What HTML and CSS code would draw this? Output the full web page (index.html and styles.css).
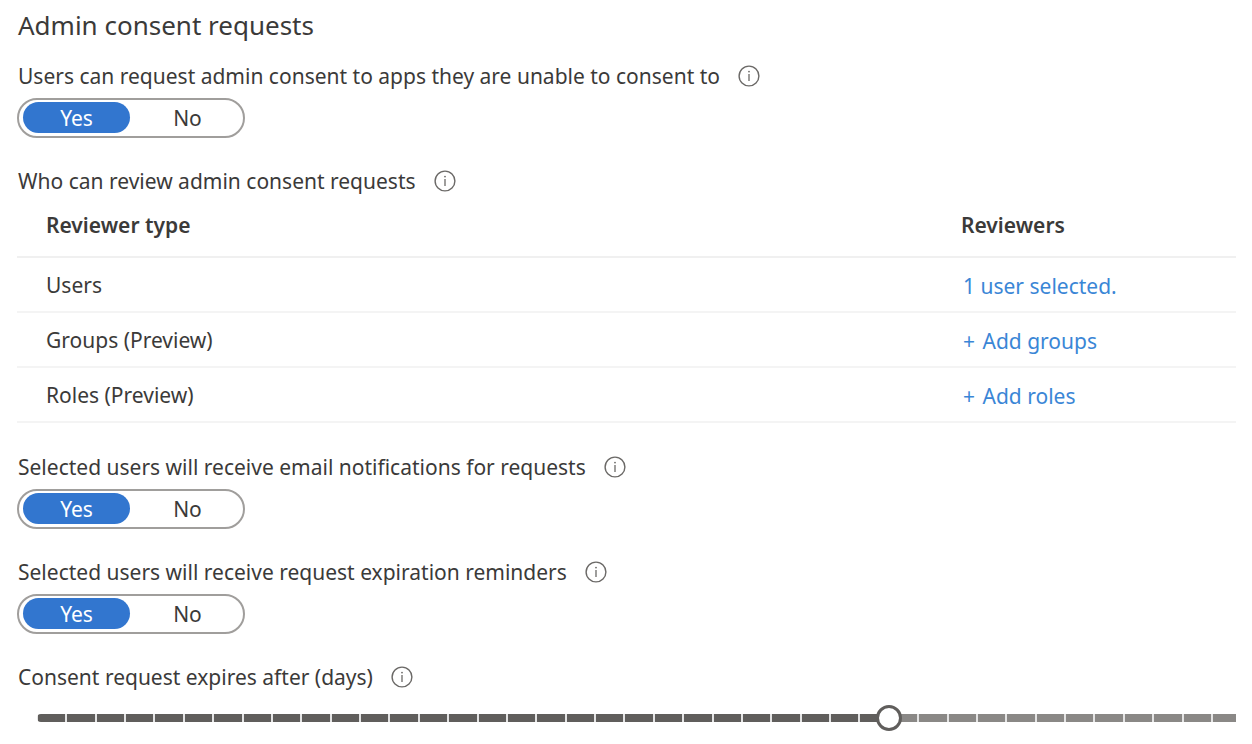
FILE: index.html
```html
<!DOCTYPE html>
<html lang="en">
<head>
    <meta charset="UTF-8">
    <meta name="viewport" content="width=device-width, initial-scale=1.0">
    <title>Admin consent requests</title>
    <link rel="stylesheet" href="styles.css">
</head>
<body>
    <!-- Shared info icon -->
    <svg class="sprite" aria-hidden="true">
        <symbol id="info" viewBox="0 0 22 22">
            <circle cx="11" cy="11" r="9.9" fill="none" stroke="currentColor" stroke-width="1.4"/>
            <path d="M11 9v7" stroke="currentColor" stroke-width="1.3"/>
            <circle cx="11" cy="6.6" r="0.9" fill="currentColor"/>
        </symbol>
    </svg>

    <main class="page">
        <h1 class="title">Admin consent requests</h1>

        <fieldset class="setting">
            <legend class="setting-label">
                Users can request admin consent to apps they are unable to consent to
                <svg class="info"><use href="#info"/></svg>
            </legend>
            <div class="toggle">
                <label class="option"><input type="radio" name="request" checked><span>Yes</span></label>
                <label class="option"><input type="radio" name="request"><span>No</span></label>
            </div>
        </fieldset>

        <section class="reviewers">
            <h2 class="setting-label" id="reviewLabel">
                Who can review admin consent requests
                <svg class="info"><use href="#info"/></svg>
            </h2>
            <table class="table" aria-labelledby="reviewLabel">
                <thead>
                    <tr>
                        <th>Reviewer type</th>
                        <th class="col-reviewers">Reviewers</th>
                    </tr>
                </thead>
                <tbody>
                    <tr>
                        <td>Users</td>
                        <td><a href="#">1 user selected.</a></td>
                    </tr>
                    <tr>
                        <td>Groups (Preview)</td>
                        <td><a href="#"><span class="plus">+</span> Add groups</a></td>
                    </tr>
                    <tr>
                        <td>Roles (Preview)</td>
                        <td><a href="#"><span class="plus">+</span> Add roles</a></td>
                    </tr>
                </tbody>
            </table>
        </section>

        <fieldset class="setting">
            <legend class="setting-label">
                Selected users will receive email notifications for requests
                <svg class="info"><use href="#info"/></svg>
            </legend>
            <div class="toggle">
                <label class="option"><input type="radio" name="email" checked><span>Yes</span></label>
                <label class="option"><input type="radio" name="email"><span>No</span></label>
            </div>
        </fieldset>

        <fieldset class="setting">
            <legend class="setting-label">
                Selected users will receive request expiration reminders
                <svg class="info"><use href="#info"/></svg>
            </legend>
            <div class="toggle">
                <label class="option"><input type="radio" name="reminders" checked><span>Yes</span></label>
                <label class="option"><input type="radio" name="reminders"><span>No</span></label>
            </div>
        </fieldset>

        <div class="setting">
            <label class="setting-label" for="days">
                Consent request expires after (days)
                <svg class="info"><use href="#info"/></svg>
            </label>
            <div class="slider">
                <input type="range" id="days" min="1" max="60" value="30" style="--fill: 49%">
            </div>
        </div>
    </main>
</body>
</html>
```
FILE: styles.css
```css
* {
    box-sizing: border-box;
}

body {
    margin: 0;
    background: #ffffff;
    color: #3b3a39;
    font-family: "Segoe UI", "Noto Sans", sans-serif;
    font-size: 21px;
    line-height: 28px;
}

.sprite {
    display: none;
}

.page {
    padding: 7px 16px 8px 17px;
}

.title {
    margin: 0 0 19px;
    padding-left: 1px;
    font-size: 26px;
    font-weight: 400;
    line-height: 36px;
}

.setting {
    min-width: 0;
    margin: 0 0 29px;
    padding: 0;
    border: 0;
}

.setting:last-child {
    margin-bottom: 0;
}

.setting-label {
    display: flex;
    align-items: center;
    gap: 18px;
    margin: 0;
    padding: 0 0 0 1px;
    font-size: 21px;
    font-weight: 400;
}

.info {
    width: 22px;
    height: 22px;
    flex: none;
    color: #6b6967;
}

/* Yes / No switch */
.toggle {
    display: inline-flex;
    gap: 4px;
    margin-top: 8px;
    padding: 2px 2px 3px 4px;
    border: 2px solid #a09e9c;
    border-radius: 20px;
    vertical-align: top;
}

.option {
    position: relative;
    cursor: pointer;
}

.option input {
    position: absolute;
    inset: 0;
    margin: 0;
    opacity: 0;
}

.option span {
    display: block;
    width: 107px;
    padding-top: 1px;
    border-radius: 16px;
    line-height: 30px;
    text-align: center;
}

.option input:checked + span {
    background: #3276cf;
    color: #ffffff;
}

/* Reviewers table */
.reviewers {
    margin-bottom: 30px;
}

.table {
    width: 100%;
    border-collapse: separate;
    border-spacing: 0;
    table-layout: fixed;
    text-align: left;
}

.table th {
    height: 63px;
    padding: 0 0 2px;
    border-bottom: 2px solid #f0f0f0;
    font-weight: 600;
}

.table td {
    height: 55px;
    padding: 0;
    border-bottom: 2px solid #f4f4f4;
}

.table th:first-child,
.table td:first-child {
    padding-left: 29px;
}

.table td:last-child {
    padding: 3px 0 0 2px;
}

.col-reviewers {
    width: 275px;
}

.plus {
    margin-right: 2px;
}

a {
    color: #3a86d6;
    text-decoration: none;
}

a:hover {
    text-decoration: underline;
}

/* Day slider, runs past the right edge of the panel */
.slider {
    margin-left: 20px;
    padding-top: 12px;
    overflow: hidden;
}

.slider input {
    display: block;
    width: calc(100% + 534px);
    height: 30px;
    margin: 0;
    background: none;
    appearance: none;
    -webkit-appearance: none;
}

.slider input::-webkit-slider-runnable-track {
    height: 8px;
    border-radius: 4px;
    background:
        repeating-linear-gradient(to right, #e4e4e4 0, #e4e4e4 1px, transparent 1px, transparent calc(100% / 59 - 1px), #e4e4e4 calc(100% / 59 - 1px), #e4e4e4 calc(100% / 59)),
        linear-gradient(to right, #605e5c var(--fill), #8a8886 var(--fill));
}

.slider input::-webkit-slider-thumb {
    width: 26px;
    height: 26px;
    margin-top: -9px;
    border: 3px solid #605e5c;
    border-radius: 50%;
    background: #ffffff;
    appearance: none;
    -webkit-appearance: none;
}
```
